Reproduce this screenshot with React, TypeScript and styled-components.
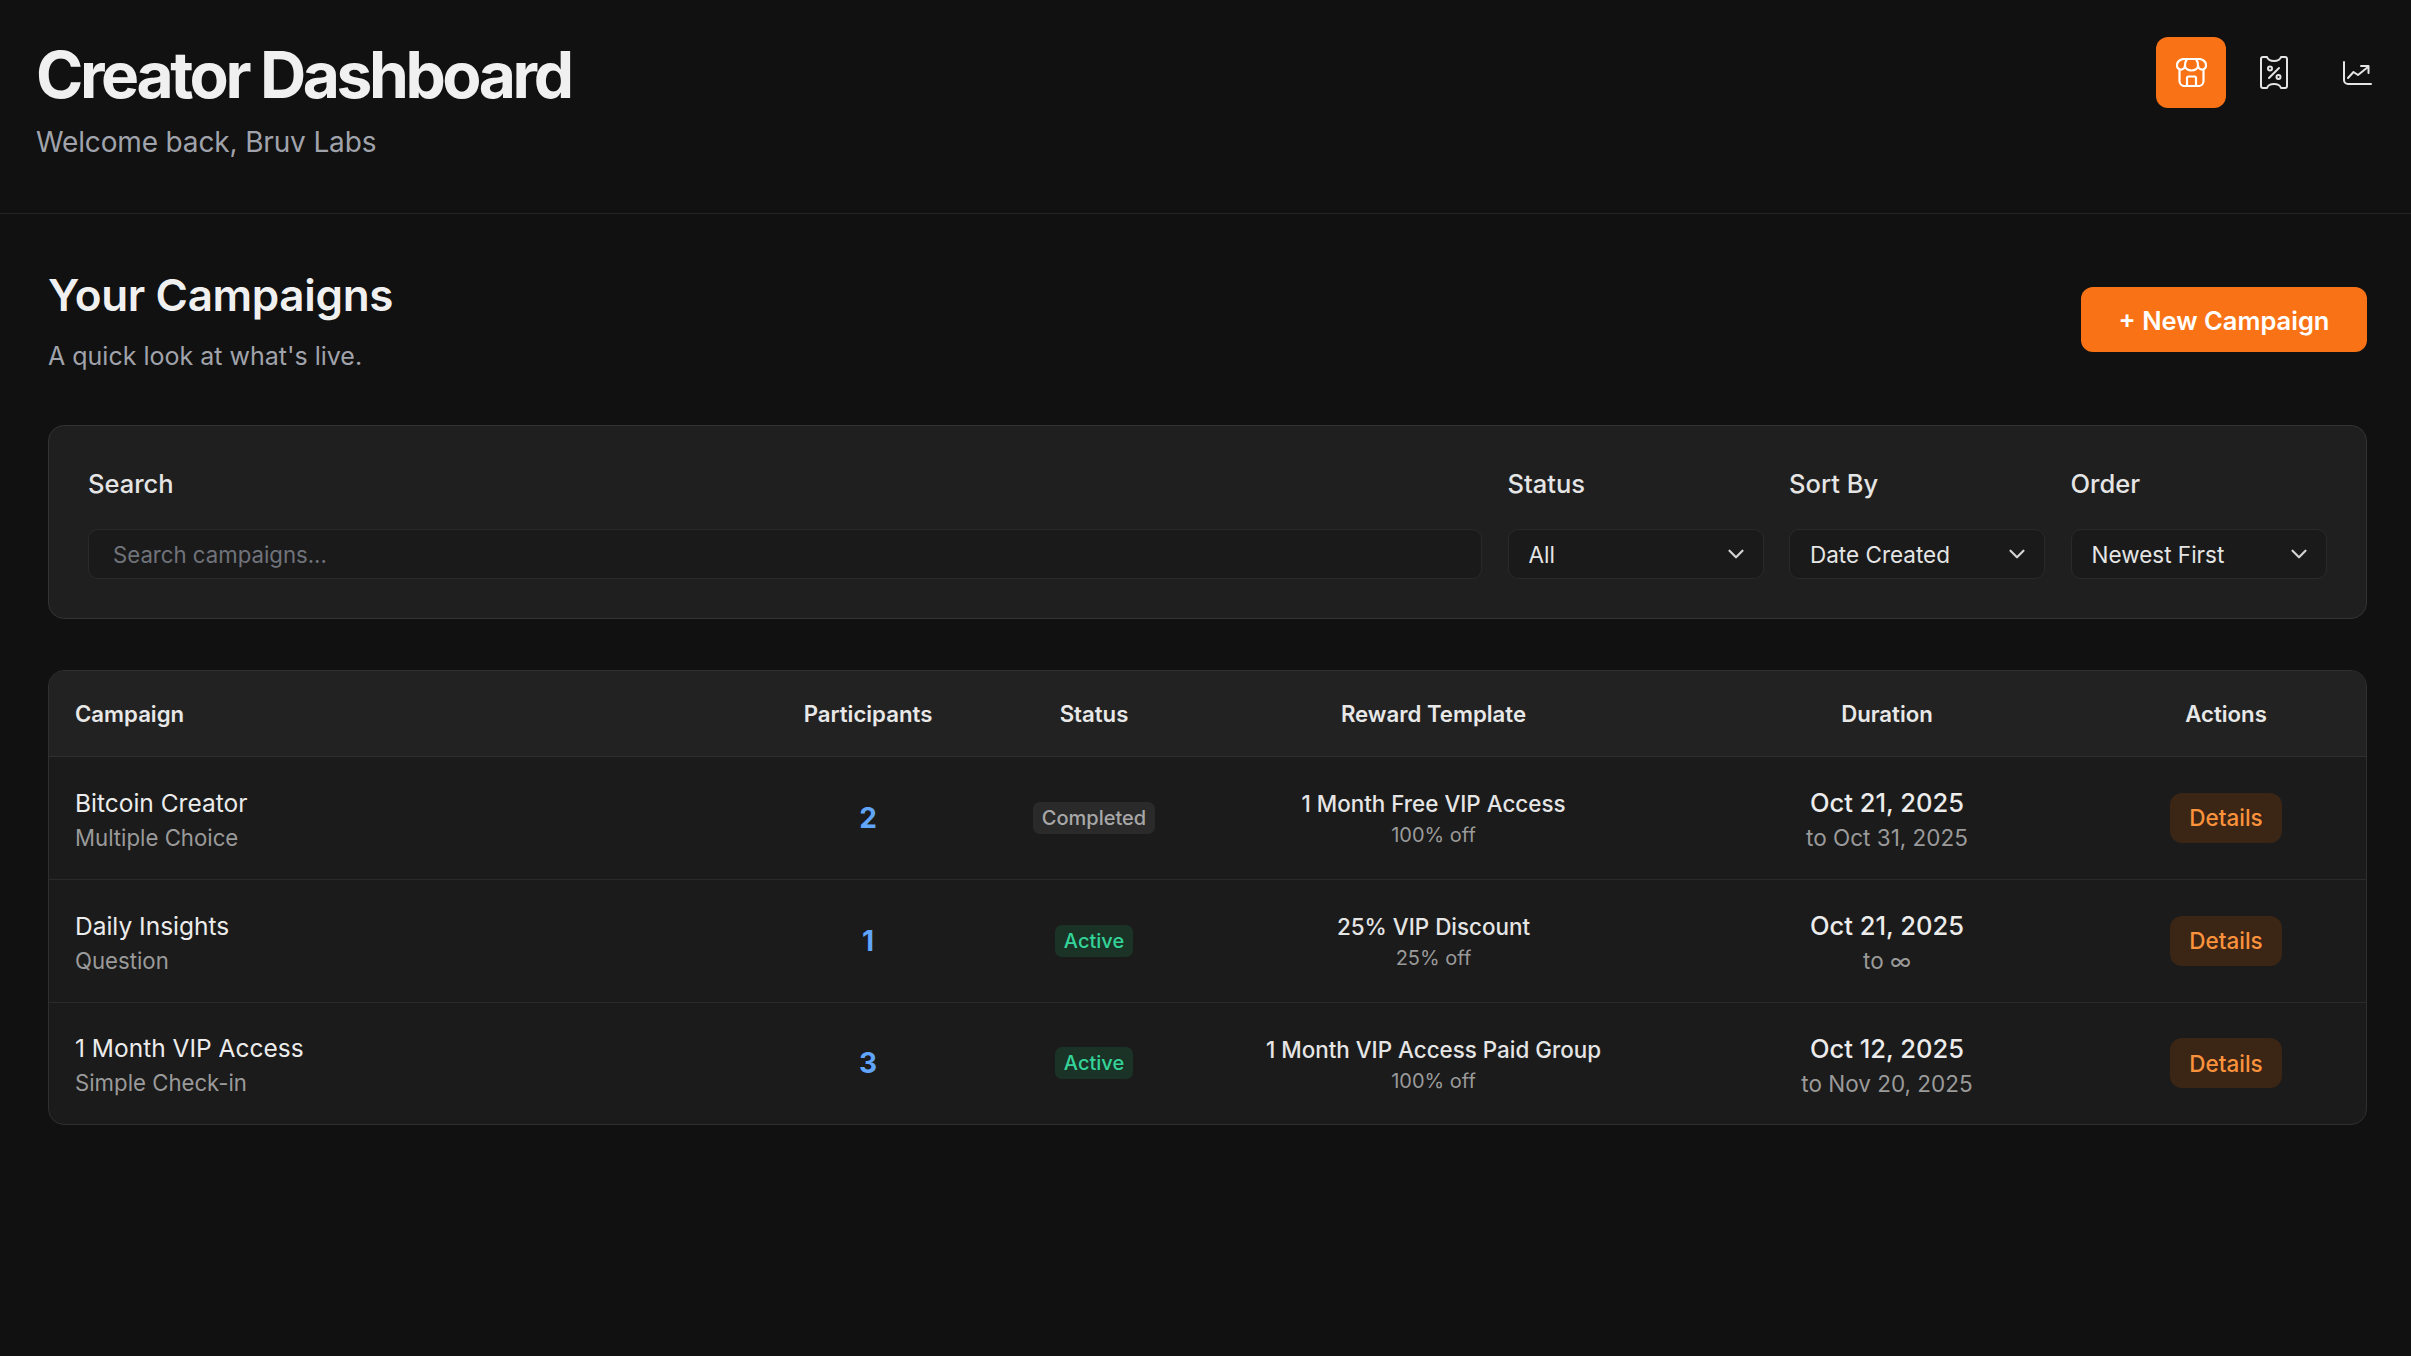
import styled, { createGlobalStyle } from "styled-components";
import { ChevronDown } from "lucide-react";

const GlobalStyle = createGlobalStyle`
  * { box-sizing: border-box; }
  html, body { margin: 0; padding: 0; background: #111111; }
  body { font-family: Inter, "Liberation Sans", sans-serif; color: #f0f0f0; }
`;

const Page = styled.div`
  min-height: 1356px;
  background: #111111;
`;

const Header = styled.header`
  height: 214px;
  padding: 37px 19px 0 36px;
  display: flex;
  justify-content: space-between;
  align-items: flex-start;
  border-bottom: 1px solid #242424;
`;

const Title = styled.h1`
  margin: 0;
  font-size: 64px;
  line-height: 76px;
  font-weight: 700;
  letter-spacing: -0.053em;
  color: #f0f0f0;
`;

const Welcome = styled.p`
  margin: 11px 0 0;
  font-size: 28px;
  line-height: 36px;
  letter-spacing: -0.15px;
  color: #a0a3ab;
`;

const IconNav = styled.nav`
  display: flex;
  gap: 13px;
`;

const NavButton = styled.button<{ $active?: boolean }>`
  width: 70px;
  height: 71px;
  border: 0;
  padding: 0;
  border-radius: 12px;
  display: flex;
  align-items: center;
  justify-content: center;
  background: ${(p) => (p.$active ? "#f97316" : "transparent")};
  color: ${(p) => (p.$active ? "#ffffff" : "#e5e5e5")};
`;

const Main = styled.main`
  padding: 49px 44px 0 48px;
`;

const SectionHead = styled.div`
  display: flex;
  justify-content: space-between;
  align-items: flex-start;
  margin-bottom: 50px;
`;

const SectionTitle = styled.h2`
  margin: 0;
  font-size: 44px;
  line-height: 64px;
  font-weight: 600;
  letter-spacing: -0.35px;
  color: #f0f0f0;
`;

const SectionSub = styled.p`
  margin: 11px 0 0;
  font-size: 25px;
  line-height: 37px;
  color: #a0a3ab;
`;

const NewButton = styled.button`
  margin-top: 24px;
  width: 286px;
  height: 65px;
  padding: 2px 0 0;
  border: 0;
  border-radius: 12px;
  background: #f97316;
  color: #ffffff;
  font-family: inherit;
  font-size: 25.5px;
  font-weight: 600;
`;

const FilterCard = styled.section`
  height: 194px;
  margin-bottom: 51px;
  padding: 38px 39.5px 0 39px;
  display: grid;
  grid-template-columns: 1fr 256px 256px 256px;
  column-gap: 25.5px;
  background: #1f1f1f;
  border: 1px solid #333333;
  border-radius: 16px;
`;

const Field = styled.div`
  display: flex;
  flex-direction: column;
  gap: 25px;
`;

const FieldLabel = styled.label`
  font-size: 25.5px;
  line-height: 40px;
  font-weight: 500;
  color: #e5e5e5;
`;

const SearchInput = styled.input`
  height: 50px;
  padding: 0 24px;
  background: #1a1a1a;
  border: 1px solid #2a2a2a;
  border-radius: 10px;
  font-family: inherit;
  font-size: 22.2px;
  color: #e5e5e5;
  &::placeholder { color: #70737a; }
`;

const Select = styled.div`
  height: 50px;
  padding: 0 14px 0 20px;
  display: flex;
  align-items: center;
  justify-content: space-between;
  background: #1a1a1a;
  border: 1px solid #2a2a2a;
  border-radius: 10px;
  font-size: 22.5px;
  color: #e5e5e5;
  svg { color: #d4d4d4; }
`;

const TableCard = styled.section`
  background: #1b1b1b;
  border: 1px solid #2f2f2f;
  border-radius: 16px;
  overflow: hidden;
`;

const Table = styled.table`
  width: 100%;
  border-collapse: collapse;
  table-layout: fixed;

  th:nth-child(1) { width: 678px; }
  th:nth-child(2) { width: 282px; }
  th:nth-child(3) { width: 170px; }
  th:nth-child(4) { width: 509px; }
  th:nth-child(5) { width: 398px; }
`;

const HeadCell = styled.th<{ $left?: boolean }>`
  height: 85px;
  padding: 0 ${(p) => (p.$left ? "26px" : "0")};
  text-align: ${(p) => (p.$left ? "left" : "center")};
  background: #222222;
  border-bottom: 1px solid #2f2f2f;
  font-size: 22.2px;
  font-weight: 600;
  color: #e8e8e8;
`;

const Row = styled.tr`
  & + & td { border-top: 1px solid #2a2a2a; }
  &:last-child td { height: 122px; }
`;

const Cell = styled.td<{ $left?: boolean }>`
  height: 123px;
  padding: 0 ${(p) => (p.$left ? "26px" : "0")};
  text-align: ${(p) => (p.$left ? "left" : "center")};
`;

const TextStack = styled.div`
  padding-top: 3px;
`;

const Name = styled.div`
  font-size: 24.5px;
  line-height: 36px;
  color: #ececec;
`;

const Kind = styled.div`
  font-size: 22.2px;
  line-height: 33px;
  color: #9a9a9a;
`;

const Count = styled.span`
  font-size: 28px;
  font-weight: 700;
  color: #60a5fa;
`;

const Badge = styled.span<{ $tone: "muted" | "green" }>`
  display: inline-block;
  padding: 0 9px;
  height: 32px;
  line-height: 32px;
  border-radius: 7px;
  font-size: 20px;
  font-weight: 500;
  background: ${(p) => (p.$tone === "green" ? "#1a3326" : "#2a2a2a")};
  color: ${(p) => (p.$tone === "green" ? "#34d399" : "#a8a8a8")};
`;

const Reward = styled.div`
  font-size: 22.4px;
  line-height: 33px;
  font-weight: 500;
  color: #e5e5e5;
`;

const RewardSub = styled.div`
  font-size: 20px;
  line-height: 31px;
  color: #9a9a9a;
`;

const DateMain = styled.div`
  font-size: 25.5px;
  line-height: 37px;
  font-weight: 500;
  color: #ececec;
`;

const DateSub = styled.div`
  font-size: 22.5px;
  line-height: 33px;
  color: #9a9a9a;
`;

const DetailsButton = styled.button`
  width: 112px;
  height: 50px;
  border: 0;
  border-radius: 12px;
  background: #3b2515;
  color: #fb923c;
  font-family: inherit;
  font-size: 22.5px;
  font-weight: 500;
`;

const StoreIcon = () => (
  <svg width="31" height="29" viewBox="0 0 31 29" fill="none" stroke="currentColor" strokeWidth="2.2" strokeLinecap="round" strokeLinejoin="round">
    <path d="M8 1H23C27 1 30 4 30 7A4 4 0 0 1 22 8A6.500 4.500 0 0 1 9 8A4 4 0 0 1 1 7C1 4 4 1 8 1Z" />
    <path d="M11 1C9.500 3 9 5.500 9 8M20 1C21.500 3 22 5.500 22 8" />
    <path d="M3.500 12V23a5 5 0 0 0 5 5H22.500a5 5 0 0 0 5-5V12" />
    <path d="M11 28V20a1.500 1.500 0 0 1 1.500-1.500h6A1.500 1.500 0 0 1 20 20V28" />
  </svg>
);

const TicketIcon = () => (
  <svg width="28" height="33" viewBox="0 0 28 33" fill="none" stroke="currentColor" strokeWidth="2" strokeLinecap="round" strokeLinejoin="round">
    <path d="M1 3a2 2 0 0 1 2-2h4c1 3 3 4 7 4s6-1 7-4h4a2 2 0 0 1 2 2v27a2 2 0 0 1-2 2h-4c-1-3-3-4-7-4s-6 1-7 4H3a2 2 0 0 1-2-2Z" />
    <path d="M19 12 9 22" />
    <circle cx="10" cy="12.500" r="2" />
    <circle cx="18.500" cy="21" r="2" />
  </svg>
);

const ChartIcon = () => (
  <svg width="29" height="24" viewBox="0 0 29 24" fill="none" stroke="currentColor" strokeWidth="2" strokeLinecap="round" strokeLinejoin="round">
    <path d="M1 1V19a4 4 0 0 0 4 4H28" />
    <path d="m5 17 5.500-6 4.500 3 10-8" />
    <path d="M18 5h7.500v7" />
  </svg>
);

const campaigns = [
  { name: "Bitcoin Creator", kind: "Multiple Choice", count: 2, status: "Completed", reward: "1 Month Free VIP Access", off: "100% off", start: "Oct 21, 2025", end: "to Oct 31, 2025" },
  { name: "Daily Insights", kind: "Question", count: 1, status: "Active", reward: "25% VIP Discount", off: "25% off", start: "Oct 21, 2025", end: "to ∞" },
  { name: "1 Month VIP Access", kind: "Simple Check-in", count: 3, status: "Active", reward: "1 Month VIP Access Paid Group", off: "100% off", start: "Oct 12, 2025", end: "to Nov 20, 2025" },
];

const filters = [
  { label: "Status", value: "All" },
  { label: "Sort By", value: "Date Created" },
  { label: "Order", value: "Newest First" },
];

export default function App() {
  return (
    <Page>
      <GlobalStyle />
      <Header>
        <div>
          <Title>Creator Dashboard</Title>
          <Welcome>Welcome back, Bruv Labs</Welcome>
        </div>
        <IconNav>
          <NavButton $active><StoreIcon /></NavButton>
          <NavButton><TicketIcon /></NavButton>
          <NavButton><ChartIcon /></NavButton>
        </IconNav>
      </Header>
      <Main>
        <SectionHead>
          <div>
            <SectionTitle>Your Campaigns</SectionTitle>
            <SectionSub>A quick look at what's live.</SectionSub>
          </div>
          <NewButton>+ New Campaign</NewButton>
        </SectionHead>
        <FilterCard>
          <Field>
            <FieldLabel>Search</FieldLabel>
            <SearchInput placeholder="Search campaigns..." />
          </Field>
          {filters.map((f) => (
            <Field key={f.label}>
              <FieldLabel>{f.label}</FieldLabel>
              <Select>
                {f.value}
                <ChevronDown size={26} strokeWidth={2} />
              </Select>
            </Field>
          ))}
        </FilterCard>
        <TableCard>
          <Table>
            <thead>
              <tr>
                <HeadCell $left>Campaign</HeadCell>
                <HeadCell>Participants</HeadCell>
                <HeadCell>Status</HeadCell>
                <HeadCell>Reward Template</HeadCell>
                <HeadCell>Duration</HeadCell>
                <HeadCell>Actions</HeadCell>
              </tr>
            </thead>
            <tbody>
              {campaigns.map((c) => (
                <Row key={c.name}>
                  <Cell $left>
                    <TextStack>
                      <Name>{c.name}</Name>
                      <Kind>{c.kind}</Kind>
                    </TextStack>
                  </Cell>
                  <Cell><Count>{c.count}</Count></Cell>
                  <Cell>
                    <Badge $tone={c.status === "Active" ? "green" : "muted"}>{c.status}</Badge>
                  </Cell>
                  <Cell>
                    <TextStack>
                      <Reward>{c.reward}</Reward>
                      <RewardSub>{c.off}</RewardSub>
                    </TextStack>
                  </Cell>
                  <Cell>
                    <TextStack>
                      <DateMain>{c.start}</DateMain>
                      <DateSub>{c.end}</DateSub>
                    </TextStack>
                  </Cell>
                  <Cell><DetailsButton>Details</DetailsButton></Cell>
                </Row>
              ))}
            </tbody>
          </Table>
        </TableCard>
      </Main>
    </Page>
  );
}
